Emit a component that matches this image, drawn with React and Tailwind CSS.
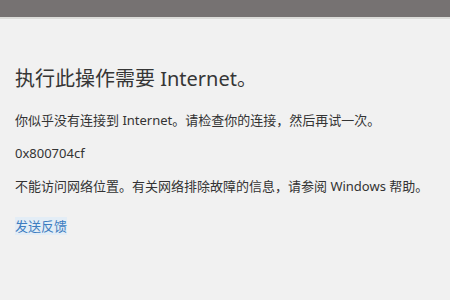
export default function App() {
  const font = { fontFamily: '"Noto Sans", "Noto Sans CJK SC", sans-serif' };
  return (
    <div className="w-[450px] h-[300px] bg-[#f1f1f1] flex flex-col overflow-hidden" style={font}>
      <div className="h-[17px] bg-[#767272] shrink-0" />
      <div className="h-[2px] bg-[#dcdcd9] shrink-0" />
      <div className="pl-[15px] flex flex-col items-start">
        <div className="mt-[47px] text-[20px] leading-[26px] text-[#363636]">执行此操作需要 Internet。</div>
        <div className="mt-[19px] text-[13px] leading-[18px] text-[#333333]">你似乎没有连接到 Internet。请检查你的连接，然后再试一次。</div>
        <div className="mt-[15px] text-[13px] leading-[18px] text-[#333333]">0x800704cf</div>
        <div className="mt-[15px] text-[13px] leading-[18px] text-[#333333]">不能访问网络位置。有关网络排除故障的信息，请参阅 Windows 帮助。</div>
        <div className="mt-[22px] text-[13px] leading-[18px] text-[#3d7cc0] bg-[#e3edf6]">发送反馈</div>
      </div>
    </div>
  );
}
